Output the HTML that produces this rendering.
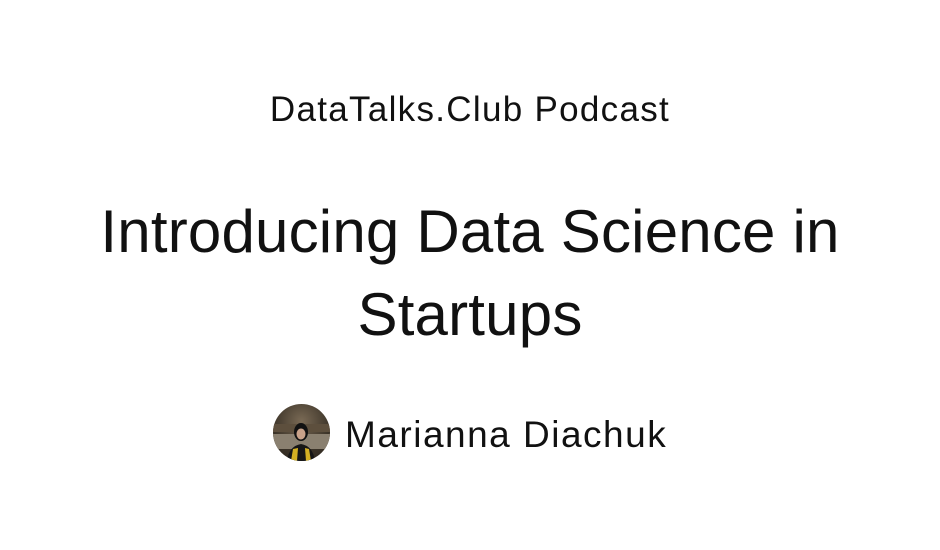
<!DOCTYPE html>
<html><head><meta charset="utf-8"><style>
html,body{margin:0;padding:0;background:#fff;width:940px;height:550px;overflow:hidden;font-family:"Liberation Sans",sans-serif;color:#111;}
.t{position:absolute;left:0;width:940px;text-align:center;white-space:nowrap;}
.a{top:90px;font-size:35px;letter-spacing:1.3px;}
.b{top:190px;font-size:60px;letter-spacing:0.2px;line-height:83px;}
.n{position:absolute;left:345px;top:414px;font-size:37px;letter-spacing:1.5px;white-space:nowrap;}
.av{position:absolute;left:273px;top:404px;width:57px;height:57px;border-radius:50%;overflow:hidden;background:radial-gradient(circle at 50% 30%,#7a6a55,#3b3328 60%,#2a241d);}
</style></head><body>
<div class="t a">DataTalks.Club Podcast</div>
<div class="t b">Introducing Data Science in<br>Startups</div>
<div class="av"><svg width="57" height="57" viewBox="0 0 57 57">
<rect x="0" y="30" width="57" height="15" fill="#8a8070"/>
<rect x="0" y="20" width="57" height="8" fill="#5d4f3d"/>
<ellipse cx="28" cy="28" rx="7" ry="9" fill="#111"/>
<ellipse cx="28" cy="30" rx="4.5" ry="5.5" fill="#c9a28a"/>
<path d="M14 57 Q16 42 28 40 Q40 42 42 57Z" fill="#161616"/>
<path d="M18 57 L20 45 L25 44 L24 57Z" fill="#d4b023"/>
<path d="M38 57 L36 45 L32 44 L33 57Z" fill="#d4b023"/>
</svg></div>
<div class="n">Marianna Diachuk</div>
</body></html>
